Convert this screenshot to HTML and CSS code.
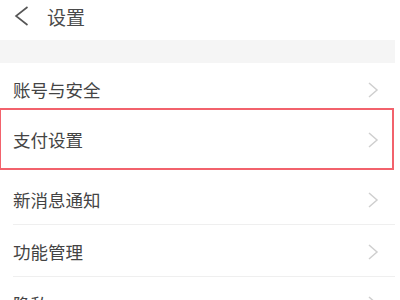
FILE: index.html
```html
<!DOCTYPE html>
<html lang="zh">
<head>
<meta charset="utf-8">
<link rel="stylesheet" href="styles.css">
</head>
<body>
<div class="page">
  <header class="topbar">
    <svg class="back" width="15" height="20" viewBox="0 0 15 20"><path d="M13.5 1 L2 10 L13.5 19" fill="none" stroke="#555" stroke-width="1.6"/></svg>
    <span class="title">设置</span>
  </header>
  <div class="band"></div>
  <ul class="list">
    <li class="row row-plain"><span class="label">账号与安全</span><svg class="arrow" width="12" height="16" viewBox="0 0 12 16"><path d="M2 1 L10 8 L2 15" fill="none" stroke="#cfcfcf" stroke-width="1.5"/></svg></li>
    <li class="row row-pay row-plain"><span class="label">支付设置</span><svg class="arrow" width="12" height="16" viewBox="0 0 12 16"><path d="M2 1 L10 8 L2 15" fill="none" stroke="#cfcfcf" stroke-width="1.5"/></svg></li>
    <li class="row"><span class="label">新消息通知</span><svg class="arrow" width="12" height="16" viewBox="0 0 12 16"><path d="M2 1 L10 8 L2 15" fill="none" stroke="#cfcfcf" stroke-width="1.5"/></svg></li>
    <li class="row"><span class="label">功能管理</span><svg class="arrow" width="12" height="16" viewBox="0 0 12 16"><path d="M2 1 L10 8 L2 15" fill="none" stroke="#cfcfcf" stroke-width="1.5"/></svg></li>
    <li class="row"><span class="label">隐私</span><svg class="arrow" width="12" height="16" viewBox="0 0 12 16"><path d="M2 1 L10 8 L2 15" fill="none" stroke="#cfcfcf" stroke-width="1.5"/></svg></li>
  </ul>
  <div class="highlight"></div>
</div>
</body>
</html>
```

FILE: styles.css
```css
html, body {
  margin: 0;
  padding: 0;
  background: #fff;
  overflow: hidden;
}
body {
  width: 400px;
  height: 300px;
  font-family: "Noto Sans CJK SC", "Noto Sans", sans-serif;
}
.page {
  position: relative;
  width: 395px;
}
.topbar {
  height: 40px;
  display: flex;
  align-items: center;
  padding-left: 14px;
  gap: 18px;
  box-sizing: border-box;
}
.back {
  display: block;
  margin-top: -8px;
}
.title {
  font-size: 19px;
  color: #4a4a4a;
  line-height: 1;
  margin-top: -8px;
}
.band {
  height: 23px;
  background: #f5f5f5;
}
.list {
  list-style: none;
  margin: 0;
  padding: 0 0 0 13px;
}
.row {
  height: 52px;
  display: flex;
  align-items: center;
  justify-content: space-between;
  padding-right: 16px;
  border-bottom: 1px solid #efefef;
  box-sizing: border-box;
  padding-top: 2px;
}
.row-plain {
  border-bottom-color: transparent;
}
.row-pay {
  height: 58px;
  padding-top: 0;
  padding-bottom: 8px;
}
.label {
  font-size: 17.5px;
  color: #444;
  line-height: 1;
}
.arrow {
  display: block;
}
.highlight {
  position: absolute;
  left: -1px;
  top: 108px;
  width: 395px;
  height: 62px;
  border: 2px solid #f2626c;
  box-sizing: border-box;
}
```
